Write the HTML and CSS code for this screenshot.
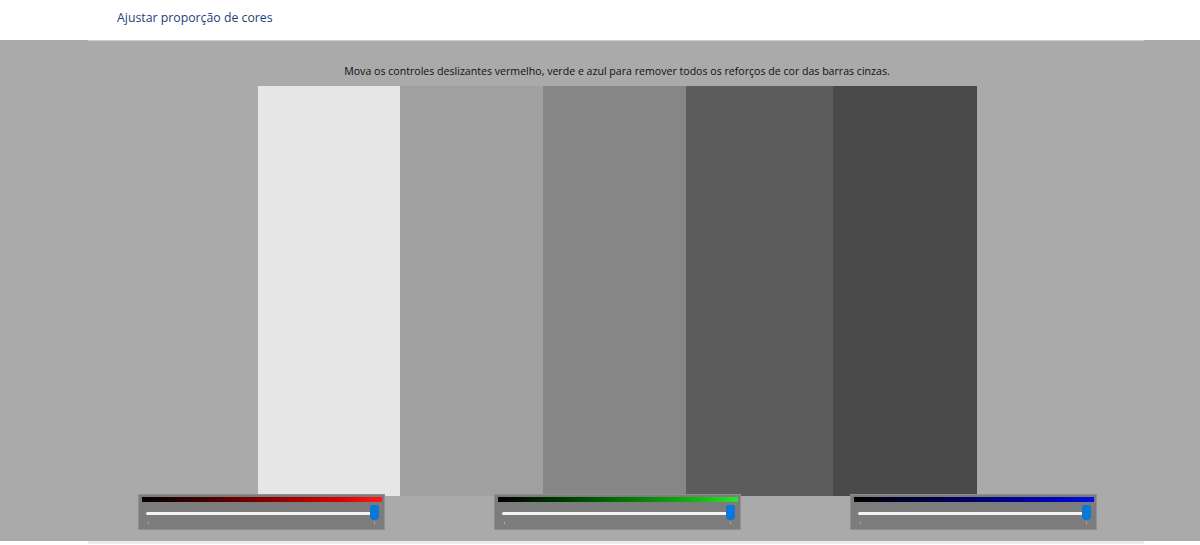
FILE: index.html
```html
<!DOCTYPE html>
<html lang="pt">
<head>
<meta charset="utf-8">
<title>Ajustar proporção de cores</title>
<link rel="stylesheet" href="styles.css">
</head>
<body>
<header class="top">
  <h1 class="title">Ajustar proporção de cores</h1>
</header>
<main class="stage">
  <div class="topline"></div>
  <p class="hint">Mova os controles deslizantes vermelho, verde e azul para remover todos os reforços de cor das barras cinzas.</p>
  <div class="bars">
    <div class="bar b1"></div>
    <div class="bar b2"></div>
    <div class="bar b3"></div>
    <div class="bar b4"></div>
    <div class="bar b5"></div>
  </div>
  <div class="sliders">
    <div class="slider">
      <div class="grad red"></div>
      <div class="track"><span class="thumb"></span></div>
      <div class="ticks"><i></i><i></i></div>
    </div>
    <div class="slider">
      <div class="grad green"></div>
      <div class="track"><span class="thumb"></span></div>
      <div class="ticks"><i></i><i></i></div>
    </div>
    <div class="slider">
      <div class="grad blue"></div>
      <div class="track"><span class="thumb"></span></div>
      <div class="ticks"><i></i><i></i></div>
    </div>
  </div>
</main>
<footer class="bottom"><div class="bottomline"></div></footer>
</body>
</html>
```
FILE: styles.css
```css
html, body {
  margin: 0;
  padding: 0;
  background: #ffffff;
  font-family: "Open Sans", "Noto Sans", "Liberation Sans", sans-serif;
}
.top {
  height: 40px;
  display: flex;
  align-items: center;
  padding-left: 117px;
}
.title {
  margin: 0;
  font-size: 12.3px;
  font-weight: 400;
  color: #1e3f78;
  position: relative;
  top: -3px;
}
.stage {
  background: #aaaaaa;
  height: 501px;
  box-sizing: border-box;
  padding-left: 34px;
  display: flex;
  flex-direction: column;
  align-items: center;
}
.topline {
  align-self: flex-start;
  margin-left: 54px;
  width: 1056px;
  height: 1px;
  background: #cfcfcf;
}
.hint {
  margin: 23px 0 0 0;
  height: 22px;
  font-size: 10.6px;
  line-height: 14px;
  color: #111;
}
.bars {
  display: flex;
  height: 410px;
  margin-left: 1px;
}
.bar { height: 100%; }
.b1 { width: 142px; background: #e6e6e6; }
.b2 { width: 143px; background: #a0a0a0; }
.b3 { width: 143px; background: #868686; }
.b4 { width: 147px; background: #5c5c5c; }
.b5 { width: 144px; background: #4a4a4a; }
.sliders {
  display: flex;
  gap: 109px;
  margin-top: -2px;
}
.slider {
  width: 247px;
  height: 36px;
  box-sizing: border-box;
  background: #7c7c7c;
  border: 1px solid #8f8f8f;
  padding: 2px 2px 0 3px;
  display: flex;
  flex-direction: column;
}
.grad {
  height: 5px;
  width: 240px;
}
.red { background: linear-gradient(to right, #000 0%, #5a0000 35%, #d00000 80%, #ff1a1a 100%); }
.green { background: linear-gradient(to right, #000 0%, #004a00 35%, #10b010 80%, #30e030 100%); }
.blue { background: linear-gradient(to right, #000 0%, #00004a 35%, #0000b0 80%, #0010e0 100%); }
.track {
  margin: 10px 0 0 4px;
  width: 230px;
  height: 3px;
  background: #f4f4f4;
  border-radius: 2px;
  position: relative;
}
.thumb {
  position: absolute;
  right: -3px;
  top: -7px;
  width: 9px;
  height: 15px;
  background: #0a78d7;
  border-radius: 2px 2px 4px 4px;
}
.ticks {
  display: flex;
  justify-content: space-between;
  margin: 7px 0 0 6px;
  width: 227px;
}
.ticks i {
  width: 1px;
  height: 2px;
  background: #b0b0b0;
}
.bottom {
  height: 4px;
}
.bottomline {
  margin-left: 88px;
  width: 1056px;
  height: 3px;
  background: #ececec;
}
```
